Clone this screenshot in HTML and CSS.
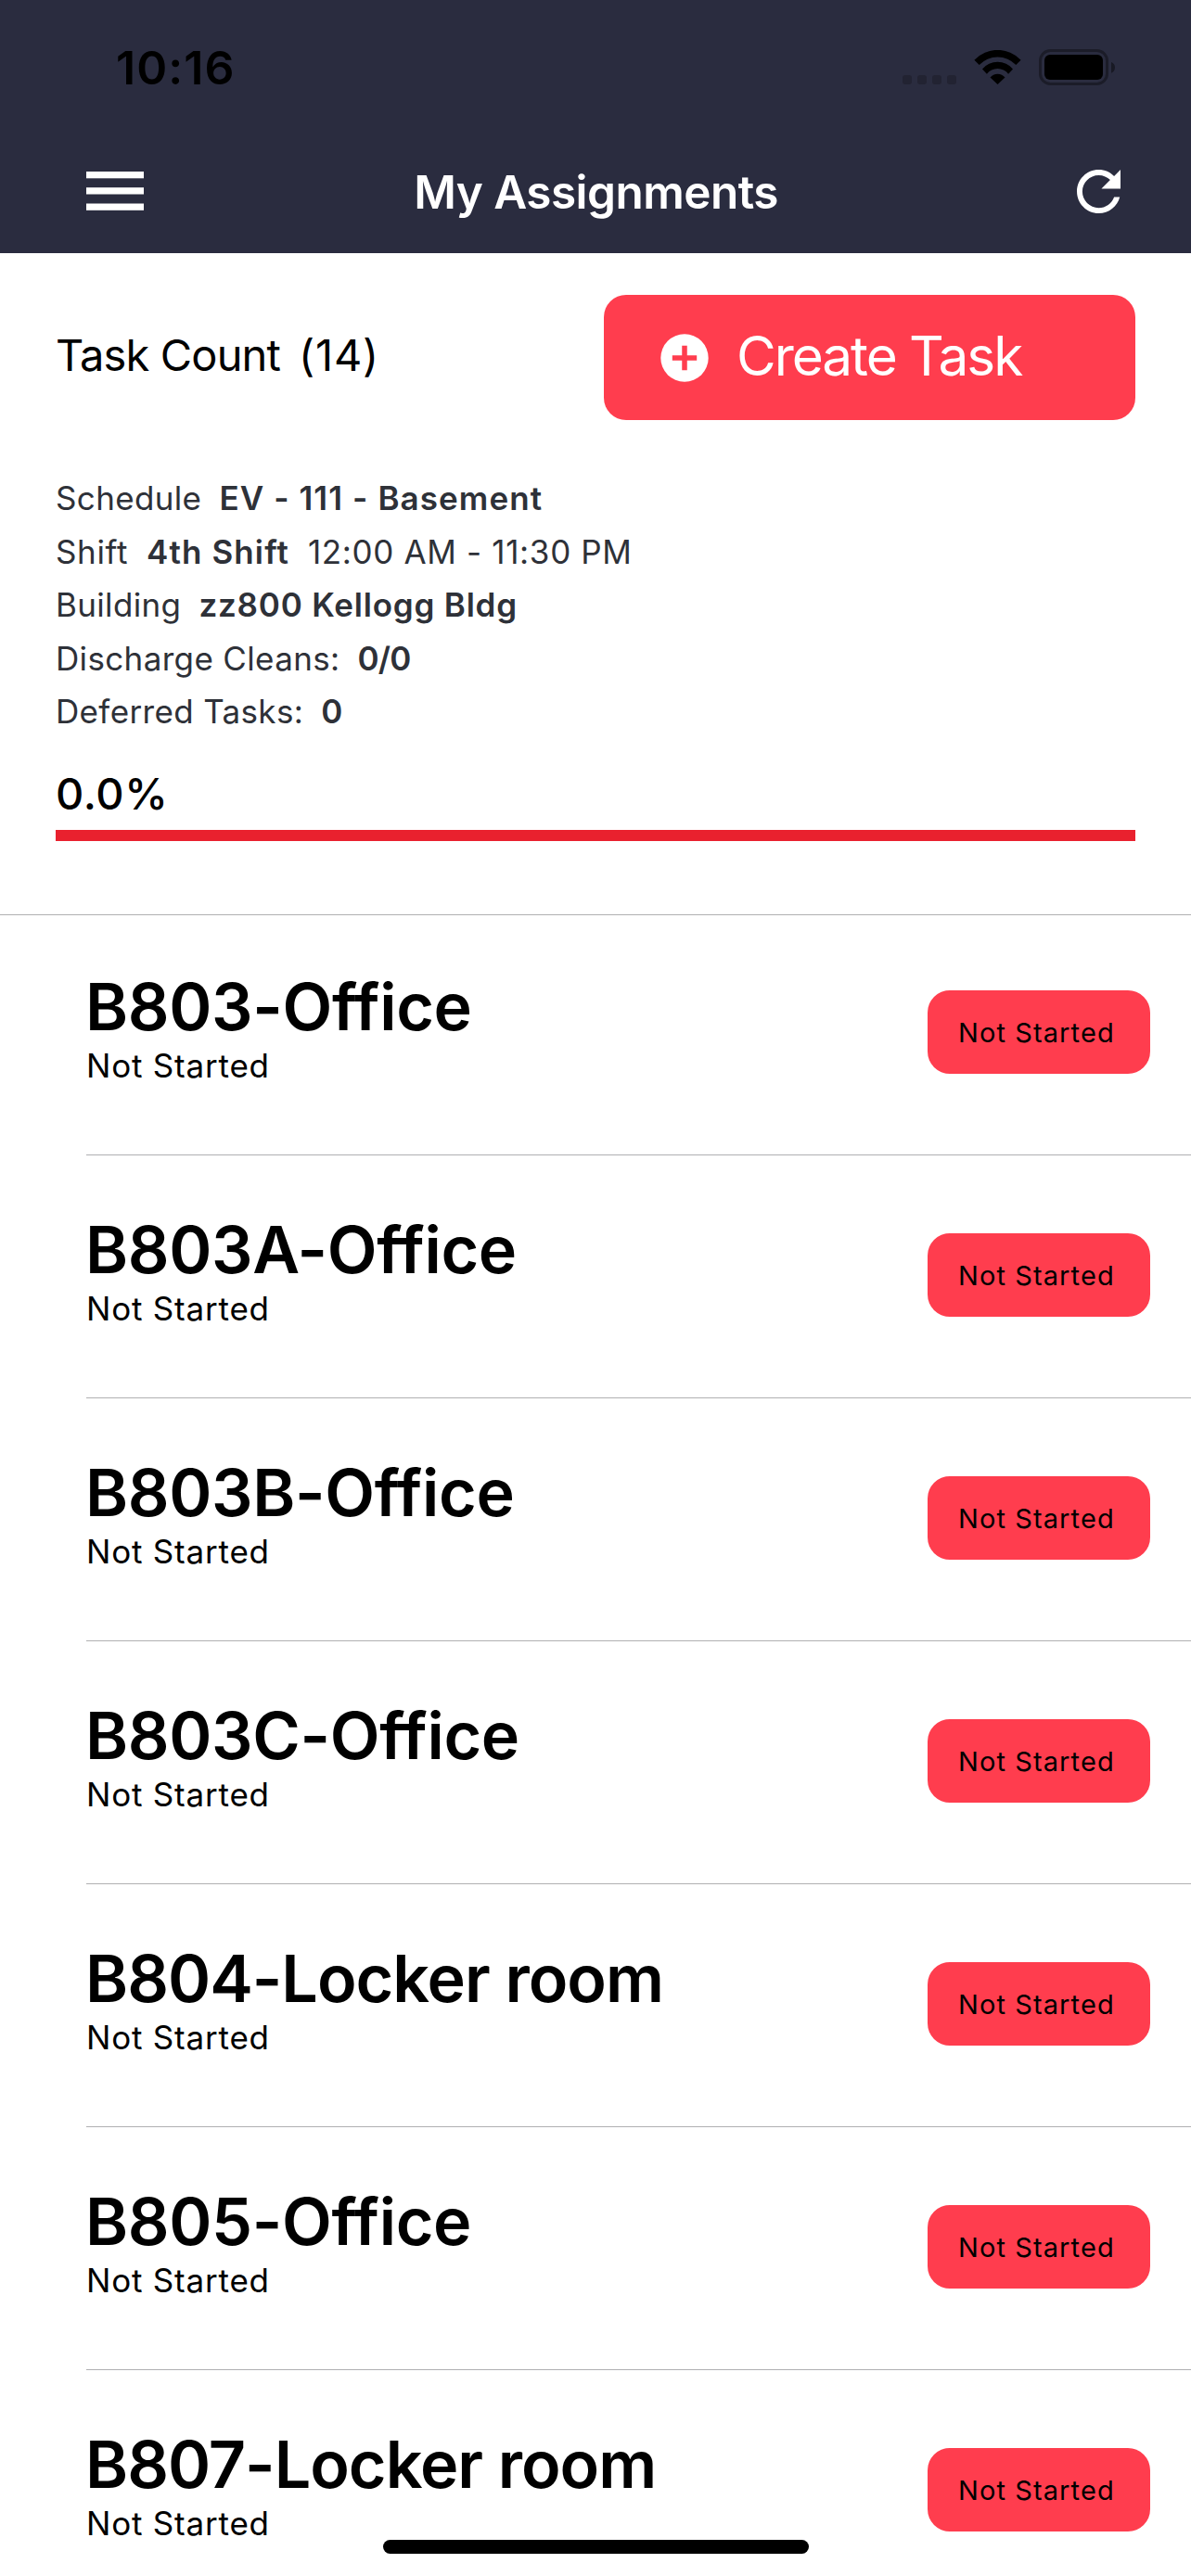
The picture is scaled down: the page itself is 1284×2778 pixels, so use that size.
FILE: index.html
```html
<!DOCTYPE html>
<html lang="en">
<head>
<meta charset="utf-8">
<title>My Assignments</title>
<link rel="stylesheet" href="styles.css">
</head>
<body>
<div class="screen">
  <header class="header">
    <div class="status-bar">
      <span class="clock">10:16</span>
      <div class="status-icons">
        <svg class="signal" viewBox="0 0 58 10" width="58" height="10"><rect width="10" height="10" rx="3"/><rect x="16" width="10" height="10" rx="3"/><rect x="32" width="10" height="10" rx="3"/><rect x="48" width="10" height="10" rx="3"/></svg>
        <svg class="wifi" viewBox="0 0 51 37" width="51" height="37"><path d="M.4 10.7A34.5 34.5 0 0 1 50.6 10.7L45.3 16A27.1 27.1 0 0 0 5.7 16Z"/><path d="M9 20.4A21.7 21.7 0 0 1 42 20.4L37.1 25.8A14.5 14.5 0 0 0 13.9 25.8Z"/><path d="M17.5 29.5A10.3 10.3 0 0 1 33.5 29.5L25.5 37Z"/></svg>
        <svg class="battery" viewBox="0 0 82 39" width="82" height="39"><rect x="1.5" y="1.5" width="72" height="36" rx="11" fill="none" stroke="#1b1c28" stroke-width="3"/><rect x="6" y="6" width="63" height="27" rx="6"/><path d="M78 14C80.600 15 82 17 82 19.800S80.600 24.800 78 25.800Z" fill="#181924"/></svg>
      </div>
    </div>
    <nav class="toolbar">
      <svg class="menu" viewBox="0 0 62 42" width="62" height="42" fill="#fff"><rect y="0" width="62" height="7.300"/><rect y="17.200" width="62" height="7.300"/><rect y="34.500" width="62" height="7.300"/></svg>
      <h1 class="page-title">My Assignments</h1>
      <svg class="refresh" viewBox="4 4 16 16" width="47" height="47" fill="#fff"><path d="M17.650 6.350C16.200 4.900 14.210 4 12 4c-4.420 0-7.990 3.580-7.990 8s3.570 8 7.990 8c3.730 0 6.840-2.550 7.730-6h-2.080c-.82 2.330-3.040 4-5.650 4-3.310 0-6-2.690-6-6s2.690-6 6-6c1.660 0 3.140.69 4.220 1.780L13 11h7V4l-2.350 2.350z"/></svg>
    </nav>
  </header>

  <section class="summary">
    <div class="summary-top">
      <div class="task-count"><span class="count-label">Task Count</span><span class="count-value">(14)</span></div>
      <button class="create" type="button">
        <svg viewBox="0 0 52 52" width="52" height="52"><circle cx="26" cy="26" r="25.700" fill="#fff"/><path d="M26 12.700V39.300M12.800 26H39.200" stroke="#ff3d4e" stroke-width="5.500"/></svg>
        <span>Create Task</span>
      </button>
    </div>
    <div class="details">
      <div class="detail"><span>Schedule</span><strong>EV - 111 - Basement</strong></div>
      <div class="detail shift"><span>Shift</span><strong>4th Shift</strong><span class="hours">12:00 AM - 11:30 PM</span></div>
      <div class="detail"><span>Building</span><strong class="building">zz800 Kellogg Bldg</strong></div>
      <div class="detail"><span>Discharge Cleans:</span><strong class="figure">0/0</strong></div>
      <div class="detail"><span>Deferred Tasks:</span><strong class="figure">0</strong></div>
    </div>
    <div class="percent">0.0%</div>
    <div class="progress"></div>
  </section>

  <ul class="tasks">
    <li class="task"><div class="task-text"><h2>B803-Office</h2><p>Not Started</p></div><span class="badge">Not Started</span></li>
    <li class="task"><div class="task-text"><h2>B803A-Office</h2><p>Not Started</p></div><span class="badge">Not Started</span></li>
    <li class="task"><div class="task-text"><h2>B803B-Office</h2><p>Not Started</p></div><span class="badge">Not Started</span></li>
    <li class="task"><div class="task-text"><h2>B803C-Office</h2><p>Not Started</p></div><span class="badge">Not Started</span></li>
    <li class="task"><div class="task-text"><h2 class="long">B804-Locker room</h2><p>Not Started</p></div><span class="badge">Not Started</span></li>
    <li class="task"><div class="task-text"><h2>B805-Office</h2><p>Not Started</p></div><span class="badge">Not Started</span></li>
    <li class="task"><div class="task-text"><h2 class="long">B807-Locker room</h2><p>Not Started</p></div><span class="badge">Not Started</span></li>
  </ul>
  <div class="home-indicator"></div>
</div>
</body>
</html>
```
FILE: styles.css
```css
* { box-sizing: border-box; }

body {
  margin: 0;
  background: #fff;
  color: #000;
  font-family: Inter, "Liberation Sans", sans-serif;
}

h1, h2, p, ul { margin: 0; padding: 0; }
svg { display: block; flex: none; }

.screen {
  position: relative;
  width: 1284px;
  height: 2778px;
  overflow: hidden;
}

/* Header */
.header { height: 273px; background: #2a2c3f; }

.status-bar {
  height: 145px;
  padding: 0 82px 0 125px;
  display: flex;
  align-items: center;
  justify-content: space-between;
}
.clock { font-size: 50px; line-height: 60px; font-weight: 600; letter-spacing: 1.1px; }
.status-icons { display: flex; align-items: flex-end; gap: 19px; }
.signal { fill: #222332; margin-bottom: 1px; }
.wifi { margin-bottom: 1px; }

.toolbar {
  height: 128px;
  padding: 0 76px 6px 93px;
  display: grid;
  grid-template-columns: 62px 1fr 47px;
  align-items: center;
}
.page-title {
  padding: 2px 31px 0 0;
  text-align: center;
  color: #fff;
  font-size: 49.5px;
  line-height: 60px;
  font-weight: 600;
  letter-spacing: -.55px;
}

/* Summary */
.summary { height: 714px; padding: 45px 60px 0; border-bottom: 1px solid #b0b0b2; }
.summary-top { display: flex; justify-content: space-between; align-items: center; }
.task-count { display: flex; gap: 20px; padding-bottom: 5px; font-size: 47px; line-height: 60px; }
.count-label { letter-spacing: -.85px; }
.count-value { letter-spacing: .8px; }
.create {
  width: 573px;
  height: 135px;
  padding: 0 0 0 61px;
  border: 0;
  border-radius: 24px;
  background: #ff3d4e;
  color: #fff;
  display: flex;
  align-items: center;
  gap: 30px;
  font: 400 58.5px/72px Inter, "Liberation Sans", sans-serif;
  letter-spacing: -2.05px;
}
.create span { padding-bottom: 3px; }

.details { margin-top: 56px; color: #2e3138; font-size: 35px; line-height: 57.600px; }
.detail { display: flex; gap: 19px; letter-spacing: .35px; white-space: pre; }
.detail.shift { gap: 20px; letter-spacing: .65px; }
.detail strong { font-weight: 600; letter-spacing: 1.1px; }
.detail strong.building { letter-spacing: .8px; }
.detail .hours { letter-spacing: .65px; }
.detail strong.figure { letter-spacing: -.8px; }

.percent { margin-top: 29px; font-size: 47px; line-height: 60px; font-weight: 500; letter-spacing: .6px; }
.progress { height: 12px; margin-top: 9px; background: #e9212e; }

/* Task list */
.tasks { list-style: none; }
.task {
  height: 262px;
  margin-left: 93px;
  padding: 60px 44px 0 0;
  border-bottom: 1px solid #b0b0b2;
  display: flex;
  justify-content: space-between;
  align-items: flex-start;
}
.task:first-child { height: 259px; padding-top: 57px; }
.task h2 { margin-left: -1px; font-size: 70px; line-height: 84px; font-weight: 600; letter-spacing: -.35px; white-space: nowrap; }
.task h2.long { letter-spacing: -1px; }
.task p { font-size: 35px; line-height: 42px; letter-spacing: .8px; }
.badge {
  width: 240px;
  height: 90px;
  margin-top: 24px;
  padding-left: 33px;
  border-radius: 24px;
  background: #ff3d4e;
  font-size: 29px;
  line-height: 91px;
  letter-spacing: 1.1px;
}

.home-indicator {
  position: absolute;
  left: 413px;
  top: 2739px;
  width: 459px;
  height: 15px;
  border-radius: 8px;
  background: #000;
}
```
